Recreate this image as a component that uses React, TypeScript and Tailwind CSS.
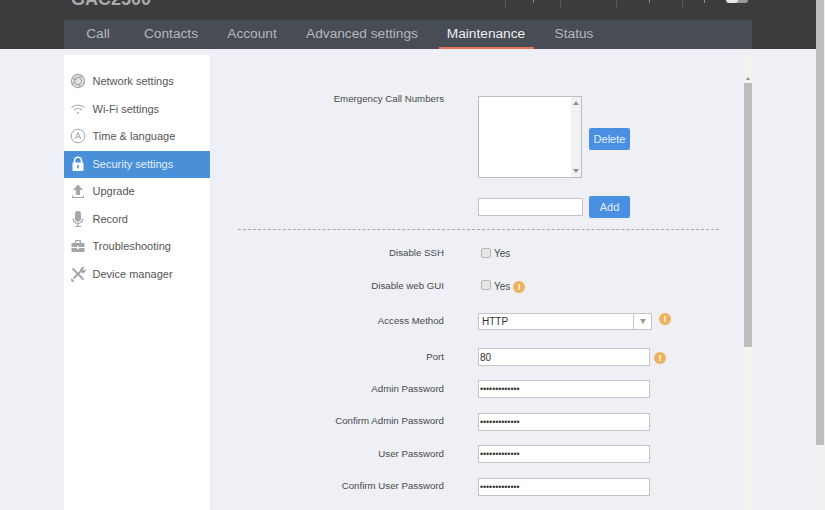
import React from 'react';

const tabs = [
  { label: 'Call', w: 'w-[68px]' },
  { label: 'Contacts', w: 'w-[78px]' },
  { label: 'Account', w: 'w-[84px]' },
  { label: 'Advanced settings', w: 'w-[136px]' },
  { label: 'Maintenance', w: 'w-[112px]', active: true },
  { label: 'Status', w: 'w-[64px]' },
];

function NetworkIcon() {
  return (
    <svg width="16" height="16" viewBox="0 0 16 16" fill="none" stroke="#a3a6ab" strokeWidth="1.2">
      <circle cx="8" cy="8" r="6.6" fill="#e4e5e8" />
      <circle cx="8" cy="8" r="3.6" />
      <path d="M3 5.5 7 7M9.5 4 12 3M9 12l1.5 2M2.5 10 5 9.5" />
    </svg>
  );
}

function WifiIcon() {
  return (
    <svg width="16" height="16" viewBox="0 0 16 16" fill="none" stroke="#a3a6ab" strokeWidth="1.1">
      <path d="M1.5 6.5a9.5 9.5 0 0 1 13 0" />
      <path d="M4 9a6 6 0 0 1 8 0" />
      <circle cx="8" cy="12" r="0.9" fill="#a3a6ab" stroke="none" />
    </svg>
  );
}

function TimeIcon() {
  return (
    <svg width="16" height="16" viewBox="0 0 16 16" fill="none" stroke="#a3a6ab" strokeWidth="1">
      <circle cx="8" cy="8" r="6.8" />
      <path d="M5.2 11 8 4.6l2.8 6.4M6.1 9h3.8" />
    </svg>
  );
}

function LockIcon() {
  return (
    <svg width="14" height="16" viewBox="0 0 14 16">
      <path d="M3.5 7V4.8a3.5 3.5 0 0 1 7 0V7" fill="none" stroke="#fff" strokeWidth="1.6" />
      <rect x="1.5" y="6.5" width="11" height="8.5" rx="1" fill="#fff" />
      <rect x="6.2" y="9" width="1.6" height="3.4" fill="#4a90d9" />
    </svg>
  );
}

function UpgradeIcon() {
  return (
    <svg width="16" height="16" viewBox="0 0 16 16" fill="#a3a6ab">
      <path d="M8 1.5 13 7H10v5H6V7H3z" />
      <path d="M2 12.5h1v1.5h10v-1.5h1V15H2z" />
    </svg>
  );
}

function MicIcon() {
  return (
    <svg width="16" height="18" viewBox="0 0 16 18" fill="none" stroke="#a3a6ab" strokeWidth="1.2">
      <rect x="5" y="1" width="6" height="10.5" rx="3" fill="#a3a6ab" stroke="none" />
      <path d="M3.2 8.5a4.8 4.8 0 0 0 9.6 0M8 13.5V16M5 16.5h6" />
    </svg>
  );
}

function ToolboxIcon() {
  return (
    <svg width="16" height="16" viewBox="0 0 16 16" fill="#a3a6ab">
      <path d="M5 5V3.2C5 2.5 5.5 2 6.2 2h3.6c.7 0 1.2.5 1.2 1.2V5H9.8V3.2H6.2V5z" />
      <path d="M1.5 5h13v4H9V8H7v1H1.5zM1.5 10H7v1h2v-1h5.5v4h-13z" />
    </svg>
  );
}

function ToolsIcon() {
  return (
    <svg width="16" height="16" viewBox="0 0 16 16" fill="none" stroke="#a3a6ab">
      <path d="M3.5 12.5 12 4" strokeWidth="2" />
      <path d="M2.5 2.5 13.5 13.5" strokeWidth="2" />
      <path d="M10.5 4.5a2.8 2.8 0 0 1 4-3l-2 2 1 1 2-1a2.8 2.8 0 0 1-3.6 3.2z" fill="#a3a6ab" strokeWidth="0.5" />
      <path d="M1.5 13 4 15l-2 .5z" fill="#a3a6ab" strokeWidth="1" />
    </svg>
  );
}

const menu = [
  { label: 'Network settings', icon: <NetworkIcon /> },
  { label: 'Wi-Fi settings', icon: <WifiIcon /> },
  { label: 'Time & language', icon: <TimeIcon /> },
  { label: 'Security settings', icon: <LockIcon />, active: true },
  { label: 'Upgrade', icon: <UpgradeIcon /> },
  { label: 'Record', icon: <MicIcon /> },
  { label: 'Troubleshooting', icon: <ToolboxIcon /> },
  { label: 'Device manager', icon: <ToolsIcon /> },
];

function Hint() {
  return (
    <span className="flex h-[12px] w-[12px] shrink-0 items-center justify-center rounded-full bg-[#eeb25c] text-[9px] font-bold leading-none text-white">
      !
    </span>
  );
}

function Row({ label, className, children }: { label: string; className: string; children: React.ReactNode }) {
  return (
    <div className={`flex items-center ${className}`}>
      <label className="w-[234px] text-right text-[9.7px] text-[#4a4a4a]">{label}</label>
      <div className="ml-[34px] flex items-center">{children}</div>
    </div>
  );
}

function TextField({ value, type = 'text' }: { value: string; type?: string }) {
  return (
    <input
      readOnly
      type={type}
      value={value}
      className={`h-[18px] w-[172px] border border-[#c4c4c4] bg-white px-[1px] text-[#333] outline-none ${
        type === 'password' ? 'text-[8.7px]' : 'text-[10px]'
      }`}
    />
  );
}

function Check({ className }: { className: string }) {
  return <span className={`ml-[3px] h-[10px] w-[10px] rounded-[2px] border border-[#b5b5b5] bg-[#e6e6e6] ${className}`} />;
}

export default function App() {
  return (
    <div className="flex h-[510px] w-[825px] overflow-hidden bg-[#eef0f5] font-['Liberation_Sans',Arial,sans-serif]">
      <div className="flex w-[816px] flex-col">
        {/* Header */}
        <header className="h-[49px] shrink-0 bg-[#3c3c3c]">
          <div className="flex h-[20px] items-end overflow-hidden pl-[71px]">
            <span className="mb-[12px] text-[18px] font-bold leading-none text-[#a9abad]">GAC2500</span>
            <div className="ml-[354px] flex h-[7px] self-start">
              <span className="flex w-[55px] justify-center border-l border-[#5a5a5a]">
                <span className="h-[3px] w-[1px] bg-[#8a8a8a]" />
              </span>
              <span className="w-[56px] border-l border-[#5a5a5a]" />
              <span className="flex w-[66px] justify-center border-l border-[#5a5a5a]">
                <span className="h-[3px] w-[1px] bg-[#8a8a8a]" />
              </span>
              <span className="flex w-[44px] justify-center border-l border-[#5a5a5a]">
                <span className="h-[3px] w-[1px] bg-[#7f93ad]" />
              </span>
            </div>
            <span className="flex h-[3px] w-[22px] self-start overflow-hidden rounded-b-full bg-[#9a9a9a]">
              <span className="h-full w-[12px] rounded-b-full bg-[#e8e8e8]" />
            </span>
          </div>
          <nav className="ml-[64px] flex h-[29px] w-[688px] bg-[#484d55]">
            {tabs.map((tab) => (
              <div key={tab.label} className={`flex h-full justify-center text-[13.7px] ${tab.w}`}>
                <span
                  className={`flex items-center justify-center border-b-2 pt-[1px] ${
                    tab.active ? 'w-[95px] border-[#e8775a] text-[#eceef0]' : 'border-transparent text-[#b4b7bb]'
                  }`}
                >
                  {tab.label}
                </span>
              </div>
            ))}
          </nav>
        </header>

        <div className="flex min-h-0 flex-1 pl-[64px] pt-[6px]">
          {/* Sidebar */}
          <aside className="w-[146px] shrink-0 bg-white pt-[13px]">
            {menu.map((item) => (
              <div
                key={item.label}
                className={`flex h-[27.5px] items-center pb-[1px] text-[11px] ${
                  item.active ? 'bg-[#4a90d9] text-[#e4eefa]' : 'text-[#555]'
                }`}
              >
                <span className="flex w-[28.5px] justify-center">{item.icon}</span>
                {item.label}
              </div>
            ))}
          </aside>

          {/* Form */}
          <main className="w-[534px] shrink-0 pt-[41px]">
            <div className="flex">
              <label className="w-[234px] text-right text-[9.7px] leading-[6px] text-[#4a4a4a]">
                Emergency Call Numbers
              </label>
              <div className="ml-[34px] flex items-center">
                <div className="flex h-[82px] w-[104px] justify-end border border-[#bdbdbd] bg-white">
                  <div className="flex w-[10px] flex-col items-center justify-between bg-[#f1f1f1] py-[4px]">
                    <span className="h-0 w-0 border-x-[3px] border-b-[4px] border-x-transparent border-b-[#8f8f8f]" />
                    <span className="h-0 w-0 border-x-[3px] border-t-[4px] border-x-transparent border-t-[#8f8f8f]" />
                  </div>
                </div>
                <button className="ml-[7px] mt-[4px] h-[22px] w-[41px] rounded-[2px] bg-[#4a90e2] text-[11px] text-[#e4eefa]">
                  Delete
                </button>
              </div>
            </div>

            <div className="ml-[268px] mt-[18px] flex items-center">
              <input readOnly className="h-[18px] w-[105px] border border-[#c4c4c4] bg-white outline-none" />
              <button className="ml-[6px] h-[22px] w-[41px] rounded-[2px] bg-[#4a90e2] text-[11px] text-[#e4eefa]">
                Add
              </button>
            </div>

            <div className="ml-[28px] mt-[11px] w-[481px] border-t border-dashed border-[#a8a8a8]" />

            <Row label="Disable SSH" className="mt-[14px] h-[18px]">
              <Check className="-mt-[1px]" />
              <span className="ml-[3px] text-[10px] text-[#4a4a4a]">Yes</span>
            </Row>
            <Row label="Disable web GUI" className="mt-[15px] h-[18px]">
              <Check className="-mt-[3px]" />
              <span className="ml-[3px] text-[10px] text-[#4a4a4a]">Yes</span>
              <span className="ml-[3px] mt-[2px]"><Hint /></span>
            </Row>
            <Row label="Access Method" className="mt-[17px] h-[18px]">
              <div className="flex h-[17px] w-[174px] items-center border border-[#c4c4c4] bg-white pl-[3px] text-[10px] text-[#333]">
                <span className="flex-1">HTTP</span>
                <span className="flex h-full w-[18px] items-center justify-center border-l border-[#c4c4c4]">
                  <span className="h-0 w-0 border-x-[3.5px] border-t-[5px] border-x-transparent border-t-[#999]" />
                </span>
              </div>
              <span className="ml-[7px] -mt-[4px]"><Hint /></span>
            </Row>
            <Row label="Port" className="mt-[18px] h-[18px]">
              <TextField value="80" />
              <span className="ml-[4px] mt-[2px]"><Hint /></span>
            </Row>
            <Row label="Admin Password" className="mt-[14px] h-[18px]">
              <TextField value="aaaaaaaaaaaaa" type="password" />
            </Row>
            <Row label="Confirm Admin Password" className="mt-[14.5px] h-[18px]">
              <TextField value="aaaaaaaaaaaaa" type="password" />
            </Row>
            <Row label="User Password" className="mt-[14.5px] h-[18px]">
              <TextField value="aaaaaaaaaaaaa" type="password" />
            </Row>
            <Row label="Confirm User Password" className="mt-[14.5px] h-[18px]">
              <TextField value="aaaaaaaaaaaaa" type="password" />
            </Row>
          </main>

          {/* Panel scrollbar */}
          <div className="flex w-[8px] shrink-0 flex-col bg-[#f3f2f1] pt-[22px]">
            <span className="mx-auto mb-[3px] h-0 w-0 border-x-[2.5px] border-b-[3px] border-x-transparent border-b-[#8f8f8f]" />
            <div className="h-[264px] bg-[#bdbdbd]" />
          </div>
        </div>
      </div>

      {/* Page scrollbar */}
      <div className="w-[9px] shrink-0 bg-[#f1f1f1]">
        <div className="h-[445px] w-[8px] bg-[#bdbdbd]" />
      </div>
    </div>
  );
}
